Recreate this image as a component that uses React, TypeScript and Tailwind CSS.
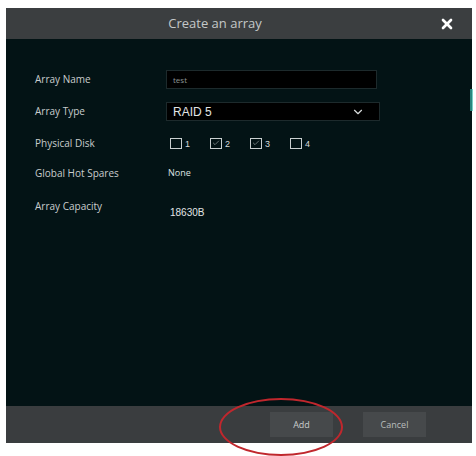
import { ChevronDown, X, Check } from 'lucide-react'

function Box({ checked, n }: { checked: boolean; n: number }) {
  return (
    <div className="flex items-end gap-[3px]">
      <div className="w-[12px] h-[11px] border border-[#c9cfcf] flex items-center justify-center">
        {checked && <Check className="w-[8px] h-[8px] text-[#9aa3a3]" strokeWidth={2} />}
      </div>
      <span className="text-[9px] leading-none text-[#d5d9d9]">{n}</span>
    </div>
  )
}

export default function App() {
  return (
    <div className="relative w-[476px] h-[456px] bg-white pt-[8px] pl-[6px] font-['Open_Sans',sans-serif]">
      <div className="w-[466px] h-[435px] flex flex-col bg-[#031315]">
        <div className="h-[31px] bg-[#3b3e40] flex items-center relative">
          <span className="flex-1 text-center text-[13px] text-[#c4c8c8] pr-[48px]">Create an array</span>
          <X className="absolute right-[17px] top-[8px] w-[16px] h-[16px] text-white" strokeWidth={4} />
        </div>

        <div className="flex-1 relative pl-[29px] pt-[30px] text-[10px] text-[#c9cdcd]">
          <div className="flex items-center h-[21px]">
            <span className="w-[131px]">Array Name</span>
            <div className="w-[211px] h-[19px] bg-black border border-[#1d2a2c] flex items-center px-[6px] text-[8px] text-[#8c9494]">test</div>
          </div>
          <div className="flex items-center h-[21px] mt-[11px]">
            <span className="w-[131px]">Array Type</span>
            <div className="w-[214px] h-[19px] bg-black border border-[#1d2a2c] flex items-center justify-between pl-[6px] pr-[14px] font-['Liberation_Sans',sans-serif] text-[12px] text-[#e2e5e5]">
              RAID 5
              <ChevronDown className="w-[14px] h-[14px] text-[#d7dbdb]" strokeWidth={2} />
            </div>
          </div>
          <div className="flex items-center h-[18px] mt-[12px]">
            <span className="w-[135px]">Physical Disk</span>
            <div className="flex gap-[20px] font-['Liberation_Sans',sans-serif]">
              <Box checked={false} n={1} />
              <Box checked={true} n={2} />
              <Box checked={true} n={3} />
              <Box checked={false} n={4} />
            </div>
          </div>
          <div className="flex items-center h-[18px] mt-[12px]">
            <span className="w-[133px]">Global Hot Spares</span>
            <span className="text-[9px] text-[#dfe2e2]">None</span>
          </div>
          <div className="flex items-start h-[24px] mt-[17px]">
            <span className="w-[135px]">Array Capacity</span>
            <span className="mt-[6px] font-['Liberation_Sans',sans-serif] text-[10px] text-[#e2e5e5]">18630B</span>
          </div>
          <div className="absolute right-[-1px] top-[50px] w-[3px] h-[22px] bg-[#3fb9ad] opacity-70" />
        </div>

        <div className="h-[37px] bg-[#3a3d3f] flex items-center justify-end gap-[30px] pr-[46px]">
          <button className="w-[63px] h-[25px] bg-[#46494b] text-[9px] text-[#c9cdcd]">Add</button>
          <button className="w-[63px] h-[25px] bg-[#46494b] text-[9px] text-[#b9bdbd]">Cancel</button>
        </div>
      </div>

      <div className="absolute left-[219px] top-[398px] w-[124px] h-[58px] rounded-[50%] border-[2px] border-[#c0272d]" />
    </div>
  )
}
